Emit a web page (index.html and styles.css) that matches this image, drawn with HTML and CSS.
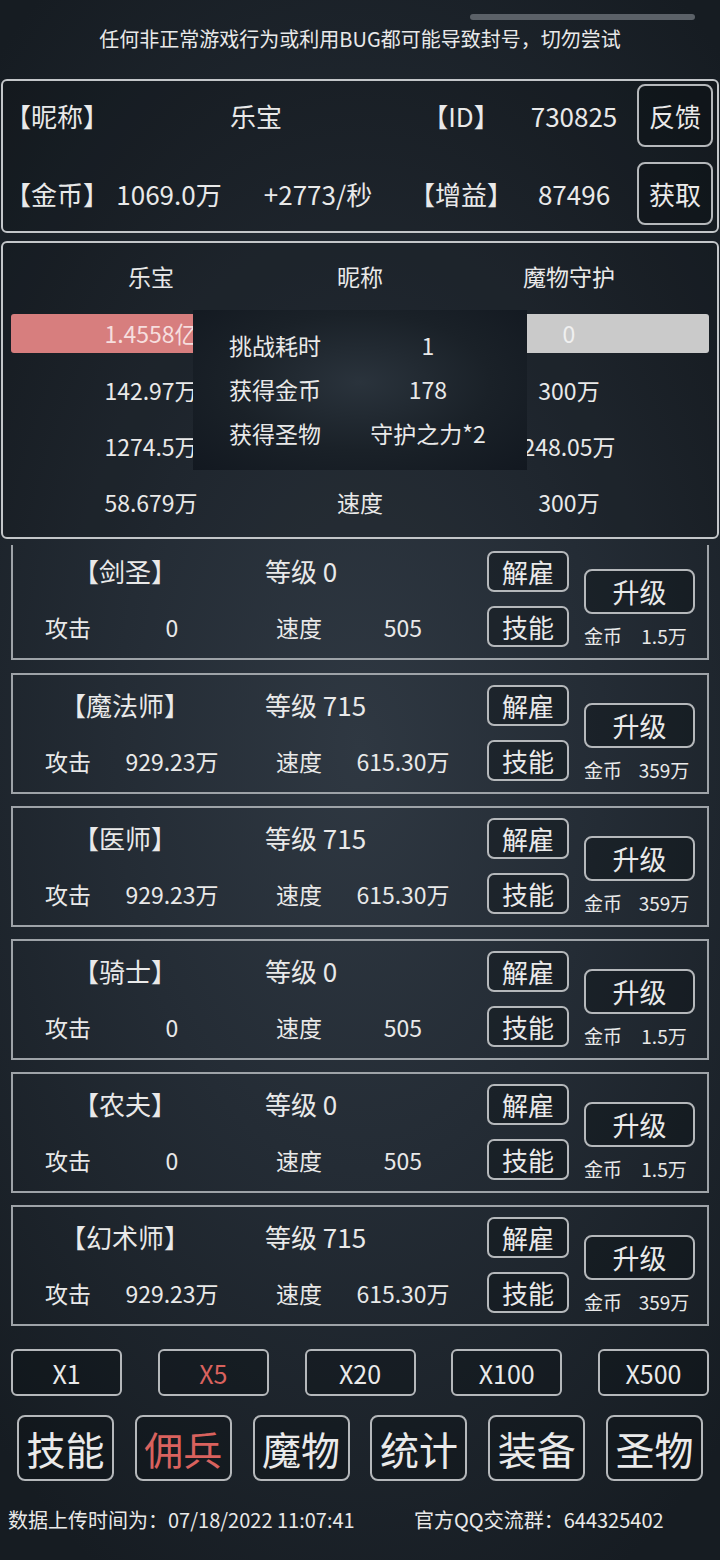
FILE: index.html
```html
<!DOCTYPE html>
<html lang="zh">
<head>
    <meta charset="UTF-8">
    <meta name="viewport" content="width=device-width, initial-scale=1.0">
    <title>佣兵</title>
    <link rel="stylesheet" href="styles.css">
</head>
<body>
    <div class="handle"></div>
    <p class="notice">任何非正常游戏行为或利用BUG都可能导致封号，切勿尝试</p>

    <div class="info panel">
        <span class="cell left">【昵称】</span>
        <span class="cell span2">乐宝</span>
        <span class="cell">【ID】</span>
        <span class="cell">730825</span>
        <button class="btn info-btn">反馈</button>

        <span class="cell left">【金币】</span>
        <span class="cell">1069.0万</span>
        <span class="cell">+2773/秒</span>
        <span class="cell">【增益】</span>
        <span class="cell">87496</span>
        <button class="btn info-btn">获取</button>
    </div>

    <div class="battle panel">
        <div class="battle-grid">
            <span>乐宝</span><span>昵称</span><span>魔物守护</span>
            <div class="bar red">1.4558亿</div><span></span><div class="bar grey">0</div>
            <span>142.97万</span><span></span><span>300万</span>
            <span>1274.5万</span><span></span><span>248.05万</span>
            <span>58.679万</span><span>速度</span><span>300万</span>
        </div>
        <div class="result">
            <span>挑战耗时</span><span class="val">1</span>
            <span>获得金币</span><span class="val">178</span>
            <span>获得圣物</span><span class="val">守护之力*2</span>
        </div>
    </div>

    <div class="heroes">
        <div class="hero">
            <div class="stats">
                <div class="row-top"><span class="name">【剑圣】</span><span class="level">等级 0</span></div>
                <div class="row-bottom"><span class="lbl">攻击</span><span class="num">0</span><span class="lbl2">速度</span><span class="num2">505</span></div>
            </div>
            <div class="actions"><button class="btn small">解雇</button><button class="btn small">技能</button></div>
            <div class="upgrade"><button class="btn up">升级</button><div class="cost"><span>金币</span><span class="cost-val">1.5万</span></div></div>
        </div>
        <div class="hero">
            <div class="stats">
                <div class="row-top"><span class="name">【魔法师】</span><span class="level">等级 715</span></div>
                <div class="row-bottom"><span class="lbl">攻击</span><span class="num">929.23万</span><span class="lbl2">速度</span><span class="num2">615.30万</span></div>
            </div>
            <div class="actions"><button class="btn small">解雇</button><button class="btn small">技能</button></div>
            <div class="upgrade"><button class="btn up">升级</button><div class="cost"><span>金币</span><span class="cost-val">359万</span></div></div>
        </div>
        <div class="hero">
            <div class="stats">
                <div class="row-top"><span class="name">【医师】</span><span class="level">等级 715</span></div>
                <div class="row-bottom"><span class="lbl">攻击</span><span class="num">929.23万</span><span class="lbl2">速度</span><span class="num2">615.30万</span></div>
            </div>
            <div class="actions"><button class="btn small">解雇</button><button class="btn small">技能</button></div>
            <div class="upgrade"><button class="btn up">升级</button><div class="cost"><span>金币</span><span class="cost-val">359万</span></div></div>
        </div>
        <div class="hero">
            <div class="stats">
                <div class="row-top"><span class="name">【骑士】</span><span class="level">等级 0</span></div>
                <div class="row-bottom"><span class="lbl">攻击</span><span class="num">0</span><span class="lbl2">速度</span><span class="num2">505</span></div>
            </div>
            <div class="actions"><button class="btn small">解雇</button><button class="btn small">技能</button></div>
            <div class="upgrade"><button class="btn up">升级</button><div class="cost"><span>金币</span><span class="cost-val">1.5万</span></div></div>
        </div>
        <div class="hero">
            <div class="stats">
                <div class="row-top"><span class="name">【农夫】</span><span class="level">等级 0</span></div>
                <div class="row-bottom"><span class="lbl">攻击</span><span class="num">0</span><span class="lbl2">速度</span><span class="num2">505</span></div>
            </div>
            <div class="actions"><button class="btn small">解雇</button><button class="btn small">技能</button></div>
            <div class="upgrade"><button class="btn up">升级</button><div class="cost"><span>金币</span><span class="cost-val">1.5万</span></div></div>
        </div>
        <div class="hero">
            <div class="stats">
                <div class="row-top"><span class="name">【幻术师】</span><span class="level">等级 715</span></div>
                <div class="row-bottom"><span class="lbl">攻击</span><span class="num">929.23万</span><span class="lbl2">速度</span><span class="num2">615.30万</span></div>
            </div>
            <div class="actions"><button class="btn small">解雇</button><button class="btn small">技能</button></div>
            <div class="upgrade"><button class="btn up">升级</button><div class="cost"><span>金币</span><span class="cost-val">359万</span></div></div>
        </div>
    </div>

    <div class="multipliers">
        <button class="btn mult">X1</button>
        <button class="btn mult active">X5</button>
        <button class="btn mult">X20</button>
        <button class="btn mult">X100</button>
        <button class="btn mult">X500</button>
    </div>

    <div class="nav">
        <button class="btn tab">技能</button>
        <button class="btn tab active">佣兵</button>
        <button class="btn tab">魔物</button>
        <button class="btn tab">统计</button>
        <button class="btn tab">装备</button>
        <button class="btn tab">圣物</button>
    </div>

    <div class="footer">
        <span class="upload">数据上传时间为：07/18/2022 11:07:41</span>
        <span>官方QQ交流群：644325402</span>
    </div>
</body>
</html>
```

FILE: styles.css
```css
body {
    margin: 0;
    width: 720px;
    height: 1560px;
    overflow: hidden;
    font-family: "Noto Sans CJK SC", "Noto Sans", sans-serif;
    color: #e9e9e9;
    background: radial-gradient(ellipse 75% 60% at 50% 48%, #2f3842 0%, #242c35 45%, #161c22 100%);
}

.handle {
    margin: 14px 0 0 470px;
    width: 225px;
    height: 6px;
    border-radius: 3px;
    background-color: #5b6168;
}

.notice {
    margin: 5px 0 0;
    text-align: center;
    font-size: 20px;
    line-height: 28px;
}

.panel {
    margin: 0 1px;
    border: 2px solid #c3c6c9;
    border-radius: 6px;
    background-color: rgba(0, 0, 0, 0.12);
}

/* player info */
.info {
    margin-top: 26px;
    height: 154px;
    box-sizing: border-box;
    padding: 3px 0 6px 2px;
    display: grid;
    grid-template-columns: 102px 124px 174px 112px 114px 82px;
    grid-template-rows: 63px 63px;
    row-gap: 15px;
    align-items: center;
    font-size: 26px;
}

.cell {
    text-align: center;
    white-space: nowrap;
}

.cell.left {
    text-align: left;
}

.cell.span2 {
    grid-column: span 2;
}

.btn {
    font-family: inherit;
    color: #eaeaea;
    background-color: rgba(10, 14, 18, 0.35);
    border: 2px solid #b5b8bb;
    border-radius: 8px;
    padding: 0;
    cursor: pointer;
}

.info-btn {
    justify-self: end;
    width: 76px;
    height: 63px;
    font-size: 26px;
}

/* battle */
.battle {
    position: relative;
    margin-top: 8px;
    height: 298px;
    box-sizing: border-box;
    padding: 5px 8px 0;
}

.battle-grid {
    display: grid;
    grid-template-columns: 280px 138px 280px;
    grid-template-rows: 56px 58px 56px 56px 56px;
    align-items: center;
    justify-items: center;
    font-size: 23px;
}

.bar {
    width: 100%;
    height: 39px;
    line-height: 39px;
    text-align: center;
    border-radius: 3px;
}

.bar.red {
    background-color: #d77e7e;
    color: #f6dede;
}

.bar.grey {
    background-color: #cacaca;
    color: #f0f0f0;
}

.result {
    position: absolute;
    left: 190px;
    top: 67px;
    width: 334px;
    height: 160px;
    box-sizing: border-box;
    padding: 13px 0 0 36px;
    display: grid;
    grid-template-columns: 130px 138px;
    grid-auto-rows: 44px;
    align-items: center;
    font-size: 23px;
    background: radial-gradient(ellipse at 50% 45%, #2a333c 0%, #1a2128 55%, #121820 100%);
}

.result .val {
    text-align: center;
    white-space: nowrap;
}

/* hero list */
.heroes {
    margin-top: 6px;
    height: 781px;
    overflow: hidden;
}

.hero {
    margin: 0 11px 12px;
    height: 121px;
    box-sizing: border-box;
    border: 2px solid #9ea3a8;
    padding: 10px 12px 11px 0;
    display: flex;
}

.hero:first-child {
    margin-top: -6px;
    margin-bottom: 13px;
}

.stats {
    flex: 0 0 474px;
    display: grid;
    grid-template-rows: 41px 41px;
    row-gap: 14px;
}

.row-top, .row-bottom {
    display: flex;
    align-items: center;
    white-space: nowrap;
}

.row-top {
    font-size: 26px;
    margin-top: -2px;
}

.name {
    width: 224px;
    text-align: center;
}

.level {
    margin-left: 28px;
}

.row-bottom {
    font-size: 23px;
    padding-left: 32px;
}

.lbl {
    width: 77px;
}

.num {
    width: 100px;
    text-align: center;
}

.lbl2 {
    margin-left: 54px;
    width: 72px;
}

.num2 {
    width: 110px;
    text-align: center;
}

.actions {
    flex: 0 0 82px;
    display: flex;
    flex-direction: column;
    gap: 14px;
}

.btn.small {
    width: 82px;
    height: 41px;
    font-size: 26px;
    border-radius: 7px;
}

.upgrade {
    flex: 0 0 111px;
    margin-left: 15px;
    padding-top: 18px;
    display: flex;
    flex-direction: column;
}

.btn.up {
    width: 111px;
    height: 47px;
    font-size: 27px;
}

.cost {
    margin-top: 11px;
    display: flex;
    font-size: 19px;
    line-height: 22px;
    white-space: nowrap;
}

.cost span:first-child {
    flex: 0 0 37px;
}

.cost-val {
    flex: 0 0 84px;
    text-align: center;
}

/* multipliers */
.multipliers {
    margin: 23px 11px 0;
    display: flex;
    justify-content: space-between;
}

.btn.mult {
    width: 111px;
    height: 47px;
    font-size: 25px;
    border-radius: 6px;
}

.active {
    color: #d9625e;
}

.nav {
    margin: 19px 17px 0;
    display: flex;
    justify-content: space-between;
}

.btn.tab {
    width: 97px;
    height: 66px;
    font-size: 39px;
    border-radius: 8px;
}

.btn.tab.active {
    color: #d9625e;
}

.footer {
    margin: 26px 0 0 8px;
    display: flex;
    font-size: 20px;
    line-height: 26px;
    white-space: nowrap;
}

.upload {
    width: 406px;
}
```
